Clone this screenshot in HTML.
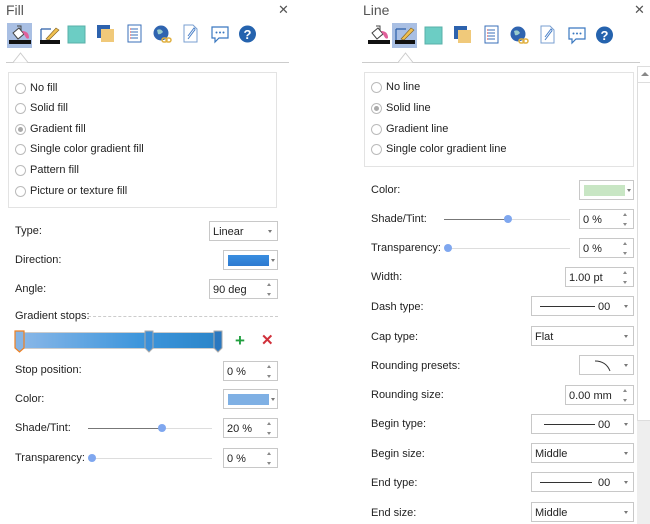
<!DOCTYPE html>
<html><head><meta charset="utf-8"><style>
*{margin:0;padding:0;box-sizing:border-box}
body{width:650px;height:524px;background:#fff;position:relative;overflow:hidden;font-family:"Liberation Sans",sans-serif;font-size:11px;color:#222}
.a{position:absolute}
.t{position:absolute;white-space:nowrap;line-height:12px}
.title{font-size:14px;color:#555}
.x{font-size:13px;color:#555;font-family:"DejaVu Sans",sans-serif}
.box{position:absolute;border:1px solid #e3e3e3}
.rad{position:absolute;width:11px;height:11px;border:1px solid #bbb;border-radius:50%;background:#fff}
.rad.on::after{content:"";position:absolute;left:2px;top:2px;width:5px;height:5px;border-radius:50%;background:#aaa}
.in{position:absolute;border:1px solid #c8c8c8;background:#fff;height:20px}
.in span{position:absolute;left:3px;top:4px;line-height:12px}
.arr{position:absolute;right:5px;top:8px;width:0;height:0;border-left:2.5px solid transparent;border-right:2.5px solid transparent;border-top:3px solid #777}
.sp{position:absolute;right:5px;top:3px;width:5px;height:13px}
.sp::before{content:"";position:absolute;top:0;left:0;border-left:2.5px solid transparent;border-right:2.5px solid transparent;border-bottom:3px solid #888}
.sp::after{content:"";position:absolute;bottom:0;left:0;border-left:2.5px solid transparent;border-right:2.5px solid transparent;border-top:3px solid #888}
.sl{position:absolute;height:1px;background:#ddd}
.knob{position:absolute;width:8px;height:8px;border-radius:50%;background:#7fa7ef}
.sep{position:absolute;height:1px;background:#ccc}
</style></head><body>

<!-- FILL PANEL -->
<div class="t title" style="left:6px;top:4px">Fill</div>
<div class="t x" style="left:278px;top:5px">✕</div>
<div class="a" style="left:7px;top:23px;width:25px;height:25px;background:#a9bfe3"></div>

<svg class="a" style="left:0;top:20px" width="290" height="48">
 <g transform="translate(8,5)">
  <path d="M5 8 L11 3 L16 9 L10 14 Z" fill="#fff" stroke="#444" stroke-width="1"/>
  <path d="M9 1 L13 1 L13 5" fill="none" stroke="#444"/>
  <path d="M14 6 Q21 6 21 13 Q19 15 17 11" fill="#e0609a"/>
  <rect x="1" y="15" width="22" height="4" fill="#111"/>
 </g>
 <g transform="translate(38,5)">
  <path d="M3 4 H13 M3 4 V15" stroke="#2a5ea8" stroke-width="1.2" fill="none"/>
  <path d="M8 14 L18 3 L21 5 L11 15 Z" fill="#f0c050" stroke="#806020" stroke-width=".6"/>
  <rect x="2" y="15" width="20" height="4" fill="#111"/>
 </g>
 <rect x="68" y="6" width="17" height="17" fill="#6ccdc4" stroke="#59b0a8"/>
 <rect x="97" y="5" width="13" height="13" fill="#2d62ad"/>
 <rect x="101" y="9" width="13" height="13" fill="#f0c97a"/>
 <g transform="translate(127,5)"><rect x="1" y="0" width="13" height="17" fill="#fff" stroke="#3a6fb8"/><path d="M4 4H11M4 7H11M4 10H11M4 13H11" stroke="#3a6fb8"/><path d="M3 4h1M3 7h1M3 10h1M3 13h1" stroke="#d33"/></g>
 <g transform="translate(153,5)"><circle cx="8" cy="8" r="7.5" fill="#2f64b0"/><path d="M4 5 Q8 3 10 7 Q7 10 5 9Z" fill="#9cc"/><rect x="9" y="13" width="5" height="4" rx="2" fill="none" stroke="#e0b040" stroke-width="1.5"/><rect x="13" y="13" width="5" height="4" rx="2" fill="none" stroke="#e0b040" stroke-width="1.5"/></g>
 <g transform="translate(183,5)"><path d="M1 0H10L14 4V17H1Z" fill="#fff" stroke="#7a9fd0"/><path d="M5 14 L11 6 Q13 4 11 3 L5 11" fill="none" stroke="#4a80c8"/></g>
 <g transform="translate(211,6)"><path d="M1 1H17V12H8L4 16V12H1Z" fill="#fff" stroke="#3a78c0" stroke-width="1.2"/><circle cx="5.5" cy="6.5" r="1" fill="#3a78c0"/><circle cx="9" cy="6.5" r="1" fill="#3a78c0"/><circle cx="12.5" cy="6.5" r="1" fill="#3a78c0"/></g>
 <g transform="translate(239,5)"><circle cx="8.5" cy="9" r="8.5" fill="#2563ae"/><text x="8.5" y="14" font-family="Liberation Sans" font-weight="bold" font-size="13" fill="#fff" text-anchor="middle">?</text></g>
</svg>
<div class="sep" style="left:6px;top:62px;width:283px"></div>
<svg class="a" style="left:13px;top:52px" width="16" height="11"><path d="M0 10.5 L7.5 1 L15 10.5" fill="#fff" stroke="#ccc"/></svg>

<div class="box" style="left:8px;top:72px;width:269px;height:136px"></div>
<div class="rad" style="left:15px;top:83px"></div><div class="t" style="left:30px;top:82px">No fill</div>
<div class="rad" style="left:15px;top:103px"></div><div class="t" style="left:30px;top:102px">Solid fill</div>
<div class="rad on" style="left:15px;top:124px"></div><div class="t" style="left:30px;top:123px">Gradient fill</div>
<div class="rad" style="left:15px;top:144px"></div><div class="t" style="left:30px;top:143px">Single color gradient fill</div>
<div class="rad" style="left:15px;top:165px"></div><div class="t" style="left:30px;top:164px">Pattern fill</div>
<div class="rad" style="left:15px;top:186px"></div><div class="t" style="left:30px;top:185px">Picture or texture fill</div>

<div class="t" style="left:15px;top:225px">Type:</div>
<div class="in" style="left:209px;top:221px;width:69px"><span>Linear</span><div class="arr"></div></div>
<div class="t" style="left:15px;top:254px">Direction:</div>
<div class="in" style="left:223px;top:250px;width:55px"><div class="a" style="left:4px;top:4px;width:41px;height:11px;background:linear-gradient(#3a8ee0,#2d7ad0)"></div><div class="arr" style="right:2px"></div></div>
<div class="t" style="left:15px;top:283px">Angle:</div>
<div class="in" style="left:209px;top:279px;width:69px"><span>90 deg</span><div class="sp"></div></div>

<div class="t" style="left:15px;top:310px">Gradient stops:</div>
<div class="a" style="left:88px;top:316px;width:190px;border-top:1px dashed #ccc"></div>
<div class="a" style="left:16px;top:332px;width:206px;height:17px;border:1px solid #ccc;background:linear-gradient(90deg,#8bb8e8,#3e96dc 60%,#2a84c8)"></div>
<svg class="a" style="left:12px;top:329px" width="215" height="26">
 <path d="M3 2H12V19L7.5 23L3 19Z" fill="#86b4e4" stroke="#f08020" stroke-width="1.2"/>
 <path d="M133 2H141V19L137 23L133 19Z" fill="#3c8fd8" stroke="#aaa"/>
 <path d="M202 2H210V19L206 23L202 19Z" fill="#2a78c0" stroke="#aaa"/>
</svg>
<div class="t" style="left:235px;top:335px;font-size:17px;font-weight:bold;color:#22a040">+</div>
<div class="t" style="left:261px;top:335px;font-size:15px;font-weight:bold;color:#d0303a">✕</div>

<div class="t" style="left:15px;top:364px">Stop position:</div>
<div class="in" style="left:223px;top:361px;width:55px"><span>0 %</span><div class="sp"></div></div>
<div class="t" style="left:15px;top:393px">Color:</div>
<div class="in" style="left:223px;top:389px;width:55px"><div class="a" style="left:4px;top:4px;width:41px;height:11px;background:#7fb0e4"></div><div class="arr" style="right:2px"></div></div>
<div class="t" style="left:15px;top:422px">Shade/Tint:</div>
<div class="sl" style="left:88px;top:428px;width:124px"></div><div class="sl" style="left:88px;top:428px;width:74px;background:#777"></div>
<div class="knob" style="left:158px;top:424px"></div>
<div class="in" style="left:223px;top:418px;width:55px"><span>20 %</span><div class="sp"></div></div>
<div class="t" style="left:15px;top:452px">Transparency:</div>
<div class="sl" style="left:90px;top:458px;width:122px"></div>
<div class="knob" style="left:88px;top:454px"></div>
<div class="in" style="left:223px;top:448px;width:55px"><span>0 %</span><div class="sp"></div></div>

<!-- LINE PANEL -->
<div class="t title" style="left:363px;top:4px">Line</div>
<div class="t x" style="left:634px;top:5px">✕</div>
<div class="a" style="left:392px;top:23px;width:25px;height:25px;background:#a9bfe3"></div>
<svg class="a" style="left:359px;top:20px" width="290" height="48">
 <g transform="translate(8,5)">
  <path d="M5 8 L11 3 L16 9 L10 14 Z" fill="#fff" stroke="#444" stroke-width="1"/>
  <path d="M9 1 L13 1 L13 5" fill="none" stroke="#444"/>
  <path d="M14 6 Q21 6 21 13 Q19 15 17 11" fill="#e0609a"/>
  <rect x="1" y="15" width="22" height="4" fill="#111"/>
 </g>
 <g transform="translate(34,5)">
  <path d="M3 4 H13 M3 4 V15" stroke="#2a5ea8" stroke-width="1.2" fill="none"/>
  <path d="M8 14 L18 3 L21 5 L11 15 Z" fill="#f0c050" stroke="#806020" stroke-width=".6"/>
  <rect x="2" y="15" width="20" height="4" fill="#111"/>
 </g>
 <rect x="66" y="7" width="17" height="17" fill="#6ccdc4" stroke="#59b0a8"/>
 <rect x="95" y="6" width="13" height="13" fill="#2d62ad"/>
 <rect x="99" y="10" width="13" height="13" fill="#f0c97a"/>
 <g transform="translate(125,6)"><rect x="1" y="0" width="13" height="17" fill="#fff" stroke="#3a6fb8"/><path d="M4 4H11M4 7H11M4 10H11M4 13H11" stroke="#3a6fb8"/><path d="M3 4h1M3 7h1M3 10h1M3 13h1" stroke="#d33"/></g>
 <g transform="translate(151,6)"><circle cx="8" cy="8" r="7.5" fill="#2f64b0"/><path d="M4 5 Q8 3 10 7 Q7 10 5 9Z" fill="#9cc"/><rect x="9" y="13" width="5" height="4" rx="2" fill="none" stroke="#e0b040" stroke-width="1.5"/><rect x="13" y="13" width="5" height="4" rx="2" fill="none" stroke="#e0b040" stroke-width="1.5"/></g>
 <g transform="translate(181,6)"><path d="M1 0H10L14 4V17H1Z" fill="#fff" stroke="#7a9fd0"/><path d="M5 14 L11 6 Q13 4 11 3 L5 11" fill="none" stroke="#4a80c8"/></g>
 <g transform="translate(209,7)"><path d="M1 1H17V12H8L4 16V12H1Z" fill="#fff" stroke="#3a78c0" stroke-width="1.2"/><circle cx="5.5" cy="6.5" r="1" fill="#3a78c0"/><circle cx="9" cy="6.5" r="1" fill="#3a78c0"/><circle cx="12.5" cy="6.5" r="1" fill="#3a78c0"/></g>
 <g transform="translate(237,6)"><circle cx="8.5" cy="9" r="8.5" fill="#2563ae"/><text x="8.5" y="14" font-family="Liberation Sans" font-weight="bold" font-size="13" fill="#fff" text-anchor="middle">?</text></g>
</svg>
<div class="sep" style="left:362px;top:62px;width:278px"></div>
<svg class="a" style="left:398px;top:52px" width="16" height="11"><path d="M0 10.5 L7.5 1 L15 10.5" fill="#fff" stroke="#ccc"/></svg>

<div class="a" style="left:637px;top:66px;width:13px;height:458px;background:#eee"></div>
<div class="a" style="left:637px;top:66px;width:13px;height:355px;background:#fff;border-left:1px solid #ddd;border-top:1px solid #ddd;border-bottom:1px solid #ddd"></div>
<div class="a" style="left:641px;top:72px;border-left:4px solid transparent;border-right:4px solid transparent;border-bottom:4px solid #888"></div>
<div class="a" style="left:637px;top:82px;width:13px;height:1px;background:#ddd"></div>

<div class="box" style="left:364px;top:72px;width:270px;height:95px"></div>
<div class="rad" style="left:371px;top:82px"></div><div class="t" style="left:386px;top:81px">No line</div>
<div class="rad on" style="left:371px;top:103px"></div><div class="t" style="left:386px;top:102px">Solid line</div>
<div class="rad" style="left:371px;top:124px"></div><div class="t" style="left:386px;top:123px">Gradient line</div>
<div class="rad" style="left:371px;top:144px"></div><div class="t" style="left:386px;top:143px">Single color gradient line</div>

<div class="t" style="left:371px;top:184px">Color:</div>
<div class="in" style="left:579px;top:180px;width:55px"><div class="a" style="left:4px;top:4px;width:41px;height:11px;background:#c8e6c4"></div><div class="arr" style="right:2px"></div></div>
<div class="t" style="left:371px;top:213px">Shade/Tint:</div>
<div class="sl" style="left:444px;top:219px;width:126px"></div><div class="sl" style="left:444px;top:219px;width:64px;background:#777"></div>
<div class="knob" style="left:504px;top:215px"></div>
<div class="in" style="left:579px;top:209px;width:55px"><span>0 %</span><div class="sp"></div></div>
<div class="t" style="left:371px;top:242px">Transparency:</div>
<div class="sl" style="left:448px;top:248px;width:122px"></div>
<div class="knob" style="left:444px;top:244px"></div>
<div class="in" style="left:579px;top:238px;width:55px"><span>0 %</span><div class="sp"></div></div>
<div class="t" style="left:371px;top:271px">Width:</div>
<div class="in" style="left:565px;top:267px;width:69px"><span>1.00 pt</span><div class="sp"></div></div>

<div class="t" style="left:371px;top:301px">Dash type:</div>
<div class="in" style="left:531px;top:296px;width:103px"><div class="a" style="left:8px;top:9px;width:55px;height:1px;background:#333"></div><span style="left:66px">00</span><div class="arr"></div></div>
<div class="t" style="left:371px;top:331px">Cap type:</div>
<div class="in" style="left:531px;top:326px;width:103px"><span>Flat</span><div class="arr"></div></div>
<div class="t" style="left:371px;top:360px">Rounding presets:</div>
<div class="in" style="left:579px;top:355px;width:55px"><svg class="a" style="left:14px;top:3px" width="20" height="14"><path d="M1 2 Q12 2 16 12" fill="none" stroke="#333"/></svg><div class="arr"></div></div>
<div class="t" style="left:371px;top:389px">Rounding size:</div>
<div class="in" style="left:565px;top:385px;width:69px"><span>0.00 mm</span><div class="sp"></div></div>
<div class="t" style="left:371px;top:418px">Begin type:</div>
<div class="in" style="left:531px;top:414px;width:103px"><div class="a" style="left:12px;top:9px;width:51px;height:1px;background:#333"></div><span style="left:66px">00</span><div class="arr"></div></div>
<div class="t" style="left:371px;top:448px">Begin size:</div>
<div class="in" style="left:531px;top:443px;width:103px"><span>Middle</span><div class="arr"></div></div>
<div class="t" style="left:371px;top:477px">End type:</div>
<div class="in" style="left:531px;top:472px;width:103px"><div class="a" style="left:8px;top:9px;width:52px;height:1px;background:#333"></div><span style="left:66px">00</span><div class="arr"></div></div>
<div class="t" style="left:371px;top:507px">End size:</div>
<div class="in" style="left:531px;top:502px;width:103px"><span>Middle</span><div class="arr"></div></div>

</body></html>
